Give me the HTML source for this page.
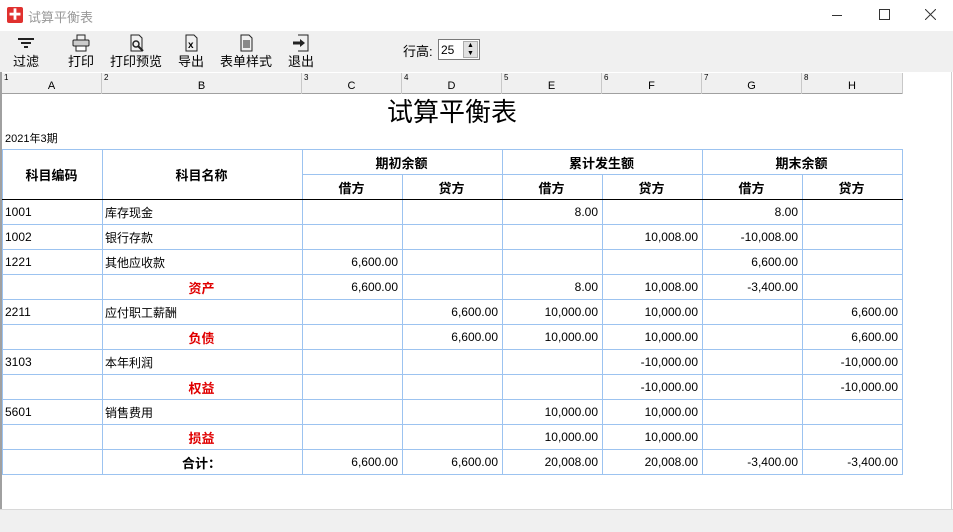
<!DOCTYPE html>
<html><head><meta charset="utf-8"><style>
*{margin:0;padding:0;box-sizing:border-box}
body{width:953px;height:532px;background:#fff;font-family:"Liberation Sans","Noto Sans CJK SC",sans-serif;font-size:12px;position:relative;overflow:hidden;color:#000}
.abs{position:absolute}
#tb{left:0;top:31px;width:953px;height:41px;background:#f0f0f0}
.btn{position:absolute;top:3px;text-align:center;font-size:13px;line-height:15px}
.btn svg{display:block;margin:0 auto 2px}
#ch{left:2px;top:73px;width:901px;height:21px;background:#f0f0f0;border-bottom:1px solid #a0a0a0}
.hc{position:absolute;top:0;height:21px;border-right:1px solid #c8c8c8;font-size:11px}
.hc i{position:absolute;left:2px;top:0;font-style:normal;font-size:8px}
.hc b{position:absolute;left:0;right:0;top:7px;text-align:center;font-weight:normal}
table{position:absolute;left:2px;top:149px;border-collapse:collapse;table-layout:fixed}
td{border:1px solid #9cc3f0;height:25px;font-size:12px;padding:0 4px 0 2px;white-space:nowrap}
td.r{text-align:right}
td.c{text-align:center;font-weight:bold;font-size:13px}
td.red{color:#e00000;text-align:center;font-weight:bold;font-size:13px}
tr.hb td{border-bottom:1.5px solid #000}
</style></head><body>
<div class="abs" style="left:0;top:0;width:953px;height:31px;background:#fff"></div>
<div class="abs" style="left:7px;top:7px;width:16px;height:16px;background:#e0312f;border-radius:2px;color:#fff;font-size:13px;line-height:16px;text-align:center">✚</div>
<div class="abs" style="left:28px;top:7px;font-size:13px;color:#999">试算平衡表</div>
<div class="abs" style="left:832px;top:15px;width:10px;height:1px;background:#333"></div>
<div class="abs" style="left:879px;top:9px;width:11px;height:11px;border:1px solid #333"></div>
<svg class="abs" style="left:925px;top:9px" width="11" height="11"><path d="M0 0L11 11M11 0L0 11" stroke="#333"/></svg>
<div id="tb" class="abs">
 <div class="btn" style="left:10px;width:32px"><svg width="20" height="18"><path d="M2 5h16M5 9h10M8 13h4" stroke="#222" stroke-width="2"/></svg>过滤</div>
 <div class="btn" style="left:65px;width:32px"><svg width="20" height="18"><rect x="6" y="1" width="8" height="5" fill="none" stroke="#222"/><rect x="2" y="6" width="16" height="6" rx="1" fill="#ccc" stroke="#222"/><rect x="5" y="12" width="10" height="5" fill="#fff" stroke="#222"/></svg>打印</div>
 <div class="btn" style="left:110px;width:52px"><svg width="20" height="18"><path d="M5 1h8l3 3v13H5z" fill="none" stroke="#222"/><circle cx="10" cy="10" r="3" fill="none" stroke="#222" stroke-width="1.5"/><path d="M12 12l5 5" stroke="#222" stroke-width="2"/></svg>打印预览</div>
 <div class="btn" style="left:176px;width:30px"><svg width="20" height="18"><path d="M5 1h8l3 3v13H5z" fill="none" stroke="#222"/><text x="7" y="14" font-size="10" font-weight="bold" font-family="Liberation Sans">x</text></svg>导出</div>
 <div class="btn" style="left:220px;width:52px"><svg width="20" height="18"><path d="M5 1h8l3 3v13H5z" fill="none" stroke="#222"/><path d="M7 7h7M7 9h7M7 11h7M7 13h7" stroke="#222"/></svg>表单样式</div>
 <div class="btn" style="left:286px;width:30px"><svg width="20" height="18"><path d="M7 1h10v16H7" fill="none" stroke="#222"/><path d="M2 9h8" stroke="#222" stroke-width="3"/><path d="M9 5l5 4-5 4z" fill="#222"/></svg>退出</div>
 <div class="abs" style="left:403px;top:10px;font-size:13px">行高:</div>
 <div class="abs" style="left:438px;top:8px;width:42px;height:21px;border:1px solid #7a7a7a;background:#fff;font-size:12px;padding:3px 0 0 2px">25</div>
 <div class="abs" style="left:463px;top:10px;width:15px;height:17px;background:#e1e1e1;border:1px solid #adadad;font-size:7px;line-height:8px;text-align:center">▲<br>▼</div>
</div>
<div class="abs" style="left:0;top:72px;width:2px;height:438px;background:#a0a0a0"></div>
<div class="abs" style="left:951px;top:72px;width:1px;height:438px;background:#d0d0d0"></div>
<div id="ch" class="abs">
 <div class="hc" style="left:0;width:100px"><i>1</i><b>A</b></div>
 <div class="hc" style="left:100px;width:200px"><i>2</i><b>B</b></div>
 <div class="hc" style="left:300px;width:100px"><i>3</i><b>C</b></div>
 <div class="hc" style="left:400px;width:100px"><i>4</i><b>D</b></div>
 <div class="hc" style="left:500px;width:100px"><i>5</i><b>E</b></div>
 <div class="hc" style="left:600px;width:100px"><i>6</i><b>F</b></div>
 <div class="hc" style="left:700px;width:100px"><i>7</i><b>G</b></div>
 <div class="hc" style="left:800px;width:101px"><i>8</i><b>H</b></div>
</div>
<div class="abs" style="left:302px;top:92px;width:300px;text-align:center;font-size:26px">试算平衡表</div>
<div class="abs" style="left:5px;top:130px;font-size:11px">2021年3期</div>
<table>
<colgroup><col style="width:100px"><col style="width:200px"><col style="width:100px"><col style="width:100px"><col style="width:100px"><col style="width:100px"><col style="width:100px"><col style="width:100px"></colgroup>
<tr><td class="c" rowspan="2" style="border-bottom:1.5px solid #000">科目编码</td><td class="c" rowspan="2" style="border-bottom:1.5px solid #000">科目名称</td><td class="c" colspan="2">期初余额</td><td class="c" colspan="2">累计发生额</td><td class="c" colspan="2">期末余额</td></tr>
<tr class="hb"><td class="c">借方</td><td class="c">贷方</td><td class="c">借方</td><td class="c">贷方</td><td class="c">借方</td><td class="c">贷方</td></tr>
<tr><td>1001</td><td>库存现金</td><td></td><td></td><td class="r">8.00</td><td></td><td class="r">8.00</td><td></td></tr>
<tr><td>1002</td><td>银行存款</td><td></td><td></td><td></td><td class="r">10,008.00</td><td class="r">-10,008.00</td><td></td></tr>
<tr><td>1221</td><td>其他应收款</td><td class="r">6,600.00</td><td></td><td></td><td></td><td class="r">6,600.00</td><td></td></tr>
<tr><td></td><td class="red">资产</td><td class="r">6,600.00</td><td></td><td class="r">8.00</td><td class="r">10,008.00</td><td class="r">-3,400.00</td><td></td></tr>
<tr><td>2211</td><td>应付职工薪酬</td><td></td><td class="r">6,600.00</td><td class="r">10,000.00</td><td class="r">10,000.00</td><td></td><td class="r">6,600.00</td></tr>
<tr><td></td><td class="red">负债</td><td></td><td class="r">6,600.00</td><td class="r">10,000.00</td><td class="r">10,000.00</td><td></td><td class="r">6,600.00</td></tr>
<tr><td>3103</td><td>本年利润</td><td></td><td></td><td></td><td class="r">-10,000.00</td><td></td><td class="r">-10,000.00</td></tr>
<tr><td></td><td class="red">权益</td><td></td><td></td><td></td><td class="r">-10,000.00</td><td></td><td class="r">-10,000.00</td></tr>
<tr><td>5601</td><td>销售费用</td><td></td><td></td><td class="r">10,000.00</td><td class="r">10,000.00</td><td></td><td></td></tr>
<tr><td></td><td class="red">损益</td><td></td><td></td><td class="r">10,000.00</td><td class="r">10,000.00</td><td></td><td></td></tr>
<tr><td></td><td class="c">合计：</td><td class="r">6,600.00</td><td class="r">6,600.00</td><td class="r">20,008.00</td><td class="r">20,008.00</td><td class="r">-3,400.00</td><td class="r">-3,400.00</td></tr>
</table>
<div class="abs" style="left:0;top:509px;width:953px;height:23px;background:#f0f0f0;border-top:1px solid #d8d8d8"></div>
</body></html>
